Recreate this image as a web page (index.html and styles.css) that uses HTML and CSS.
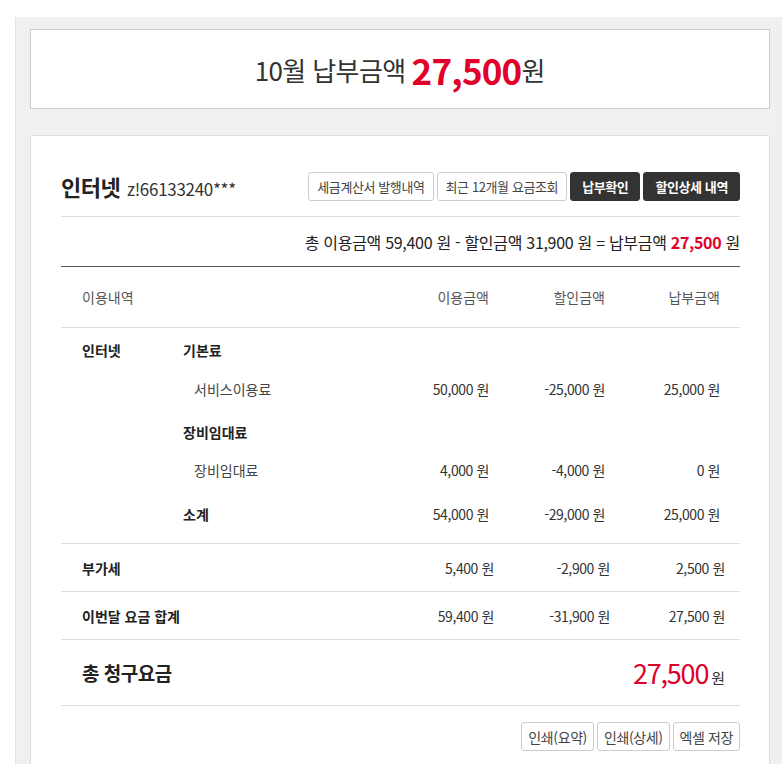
FILE: index.html
```html
<!DOCTYPE html>
<html lang="ko">
<head>
<meta charset="utf-8">
<title>요금 조회</title>
<link rel="stylesheet" href="styles.css">
</head>
<body>
<div class="page">
  <div class="total-box">
    <span class="tb-label">10월 납부금액</span>
    <strong class="tb-amount">27,500</strong><span class="tb-unit">원</span>
  </div>

  <div class="card">
    <div class="card-head">
      <h2 class="svc">인터넷 <span class="svc-id">z!66133240***</span></h2>
      <div class="btns">
        <button class="btn">세금계산서 발행내역</button>
        <button class="btn">최근 12개월 요금조회</button>
        <button class="btn dark">납부확인</button>
        <button class="btn dark">할인상세 내역</button>
      </div>
    </div>

    <div class="summary">총 이용금액 59,400 원 - 할인금액 31,900 원 = 납부금액&nbsp;<strong class="red">27,500</strong>&nbsp;원</div>

    <div class="bill">
      <div class="bill-head">
        <div class="bh-name">이용내역</div>
        <div class="cols">
          <div class="amt">이용금액</div>
          <div class="amt">할인금액</div>
          <div class="amt">납부금액</div>
        </div>
      </div>

      <div class="section">
        <div class="cat">인터넷</div>
        <div class="items">
          <div class="line group">기본료</div>
          <div class="line item">
            <div class="name">서비스이용료</div>
            <div class="amt">50,000 원</div>
            <div class="amt">-25,000 원</div>
            <div class="amt">25,000 원</div>
          </div>
          <div class="line group next">장비임대료</div>
          <div class="line item tight">
            <div class="name">장비임대료</div>
            <div class="amt">4,000 원</div>
            <div class="amt">-4,000 원</div>
            <div class="amt">0 원</div>
          </div>
          <div class="line subtotal">
            <div class="name">소계</div>
            <div class="amt">54,000 원</div>
            <div class="amt">-29,000 원</div>
            <div class="amt">25,000 원</div>
          </div>
        </div>
      </div>

      <div class="row">
        <div class="name">부가세</div>
        <div class="amt">5,400 원</div>
        <div class="amt">-2,900 원</div>
        <div class="amt">2,500 원</div>
      </div>
      <div class="row">
        <div class="name">이번달 요금 합계</div>
        <div class="amt">59,400 원</div>
        <div class="amt">-31,900 원</div>
        <div class="amt">27,500 원</div>
      </div>
      <div class="grand">
        <div class="grand-label">총 청구요금</div>
        <div class="grand-value"><span class="grand-num">27,500</span><span class="grand-unit">원</span></div>
      </div>
    </div>

    <div class="foot-btns">
      <button class="btn small">인쇄(요약)</button>
      <button class="btn small">인쇄(상세)</button>
      <button class="btn small">엑셀 저장</button>
    </div>
  </div>
</div>
</body>
</html>
```

FILE: styles.css
```css
* { box-sizing: border-box; }

body {
  margin: 0;
  background: #fff;
  color: #333;
  font-family: "Noto Sans CJK KR", "Noto Sans", sans-serif;
}

.page {
  margin: 17px 0 0 15px;
  padding: 12px 0 0 14px;
  background: #f0f0f0;
  border-left: 1px solid #e4e4e4;
  min-height: 800px;
  overflow: hidden;
}

.total-box {
  width: 740px;
  height: 80px;
  background: #fff;
  border: 1px solid #ccc;
  display: flex;
  align-items: center;
  justify-content: center;
  color: #333;
}
.tb-label { font-size: 26px; letter-spacing: -0.6px; margin-right: 6px; }
.tb-amount { font-size: 35px; font-weight: 700; color: #e0002a; letter-spacing: -0.8px; }
.tb-unit { font-size: 26px; }

.card {
  width: 740px;
  margin-top: 26px;
  background: #fff;
  border: 1px solid #ddd;
  border-radius: 3px;
  padding: 0 29px 20px 30px;
}

.card-head {
  height: 81px;
  padding-top: 20px;
  border-bottom: 1px solid #ddd;
  display: flex;
  align-items: center;
  justify-content: space-between;
}
.svc {
  margin: 0;
  font-size: 22px;
  font-weight: 700;
  color: #222;
  letter-spacing: -0.5px;
}
.svc-id { font-size: 17px; font-weight: 400; color: #333; letter-spacing: -0.3px; margin-left: 1px; }

.btns { display: flex; gap: 3px; }

.btn {
  height: 29px;
  padding: 0 8px;
  font-family: inherit;
  font-size: 13px;
  color: #444;
  background: #fff;
  border: 1px solid #ccc;
  border-radius: 3px;
  letter-spacing: -0.4px;
}
.btn.dark {
  background: #333;
  border-color: #333;
  color: #fff;
  font-weight: 700;
  padding: 0 11px;
}

.summary {
  height: 50px;
  border-bottom: 1px solid #555;
  display: flex;
  align-items: center;
  justify-content: flex-end;
  font-size: 16px;
  color: #222;
  letter-spacing: -0.3px;
}
.red { color: #e0002a; font-weight: 700; }

.bill { font-size: 14px; }

.bill-head {
  height: 61px;
  border-bottom: 1px solid #ddd;
  display: flex;
  align-items: center;
  padding: 0 20px 0 21px;
  color: #555;
}
.bh-name { flex: 1; }
.cols { display: grid; grid-template-columns: 116px 116px 115px; }

.amt { text-align: right; letter-spacing: -0.4px; color: #333; }
.bill-head .amt { color: #555; letter-spacing: 0; }

.section {
  display: flex;
  padding: 10px 20px 17px 0;
  border-bottom: 1px solid #ddd;
}
.cat {
  width: 122px;
  padding-left: 21px;
  font-weight: 700;
  color: #222;
  line-height: 24px;
}
.items { flex: 1; }
.line {
  display: grid;
  grid-template-columns: 1fr 116px 116px 115px;
  line-height: 24px;
}
.line.group { display: block; font-weight: 700; color: #222; }
.line.group.next { margin-top: 19px; }
.line.item { margin-top: 15px; }
.line.item.tight { margin-top: 14px; }
.line.item .name { padding-left: 11px; color: #444; }
.line.subtotal { margin-top: 20px; }
.line.subtotal .name { font-weight: 700; color: #222; }

.row {
  height: 48px;
  border-bottom: 1px solid #ddd;
  display: grid;
  grid-template-columns: 1fr 116px 116px 115px;
  align-items: center;
  padding: 0 15px 0 21px;
}
.row .name { font-weight: 700; color: #222; }

.grand {
  height: 66px;
  border-bottom: 1px solid #ddd;
  display: flex;
  align-items: center;
  justify-content: space-between;
  padding: 0 15px 0 21px;
}
.grand-label { font-size: 19px; font-weight: 700; color: #222; letter-spacing: -0.5px; }
.grand-value { display: flex; align-items: baseline; }
.grand-num { font-size: 27px; color: #e0002a; letter-spacing: -1.2px; }
.grand-unit { font-size: 15px; margin-left: 3px; color: #333; }

.foot-btns {
  margin-top: 16px;
  display: flex;
  justify-content: flex-end;
  gap: 3px;
}
.btn.small { font-size: 14px; padding: 0 6px; height: 29px; }
```
